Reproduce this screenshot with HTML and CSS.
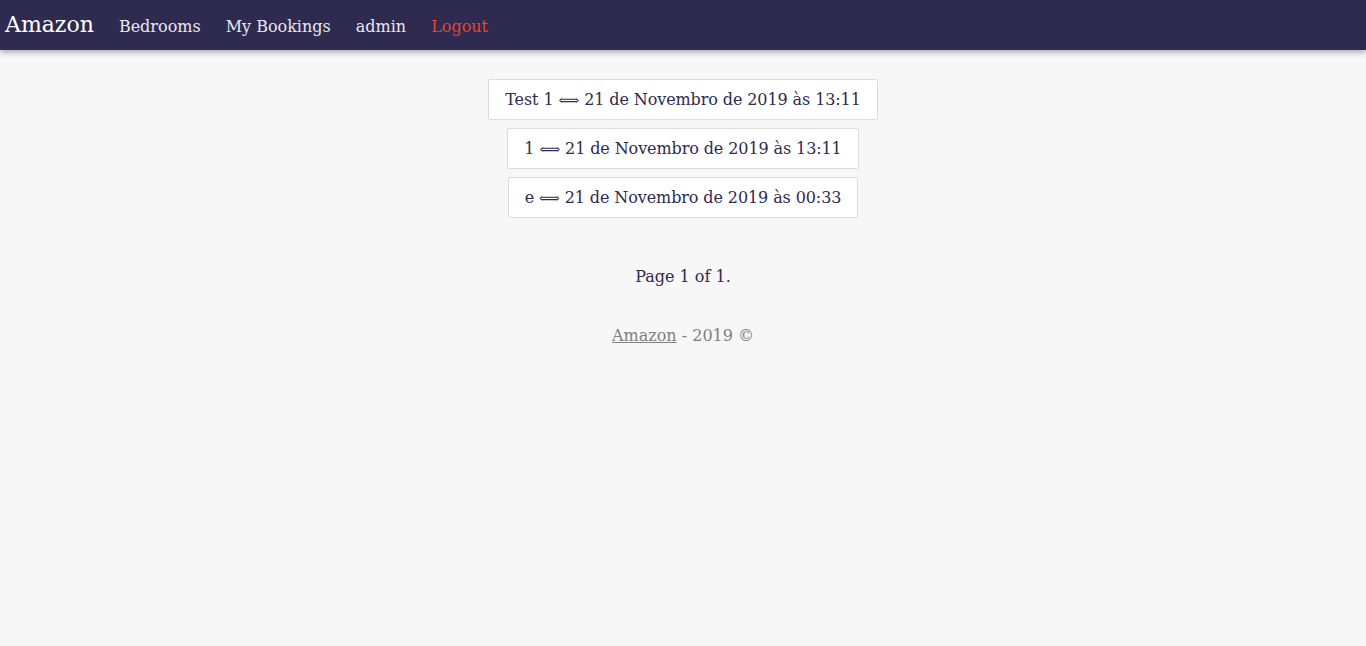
FILE: index.html
```html
<!DOCTYPE html>
<html>
<head>
<meta charset="utf-8">
<link rel="stylesheet" href="styles.css">
</head>
<body>
<nav class="navbar">
  <a class="brand" href="#">Amazon</a>
  <a class="nav-link" href="#">Bedrooms</a>
  <a class="nav-link" href="#">My Bookings</a>
  <a class="nav-link" href="#">admin</a>
  <a class="nav-link logout" href="#">Logout</a>
</nav>
<main class="content">
  <ul class="bookings">
    <li class="booking">Test 1 <span class="arrow">⟺</span> 21 de Novembro de 2019 às 13:11</li>
    <li class="booking">1 <span class="arrow">⟺</span> 21 de Novembro de 2019 às 13:11</li>
    <li class="booking">e <span class="arrow">⟺</span> 21 de Novembro de 2019 às 00:33</li>
  </ul>
  <p class="pager">Page 1 of 1.</p>
  <footer class="footer"><a href="#">Amazon</a> - 2019 ©</footer>
</main>
</body>
</html>
```
FILE: styles.css
```css
html, body {
  margin: 0;
  padding: 0;
}
body {
  background: #f7f7f7;
  font-family: "DejaVu Serif", serif;
  color: #2f2a50;
  min-height: 646px;
}
.navbar {
  height: 50px;
  background: #2f2a50;
  display: flex;
  align-items: center;
  padding: 2px 5px 0;
  box-sizing: border-box;
  box-shadow: 0 2px 6px rgba(0,0,0,0.35);
}
.navbar a {
  text-decoration: none;
}
.brand {
  color: #ffffff;
  font-size: 22px;
  margin-right: 25px;
  margin-top: -3px;
}
.nav-link {
  color: #e8e8f0;
  font-size: 16px;
  margin-right: 25px;
}
.logout {
  color: #e8452f;
}
.content {
  display: flex;
  flex-direction: column;
  align-items: center;
  padding-top: 29px;
}
.bookings {
  list-style: none;
  margin: 0;
  padding: 0;
  display: flex;
  flex-direction: column;
  align-items: center;
  gap: 8px;
}
.booking {
  background: #fff;
  border: 1px solid #dcdcdc;
  border-radius: 2px;
  padding: 0 16px;
  height: 39px;
  line-height: 39px;
  font-size: 16px;
  letter-spacing: -0.1px;
  color: #2f2a50;
}
.arrow {
  font-size: 14.5px;
}
.pager {
  margin: 47px 0 0;
  font-size: 16px;
  line-height: 24px;
  color: #2f2a50;
}
.footer {
  margin-top: 35px;
  font-size: 16px;
  line-height: 24px;
  color: #808080;
}
.footer a {
  color: #808080;
}
```
